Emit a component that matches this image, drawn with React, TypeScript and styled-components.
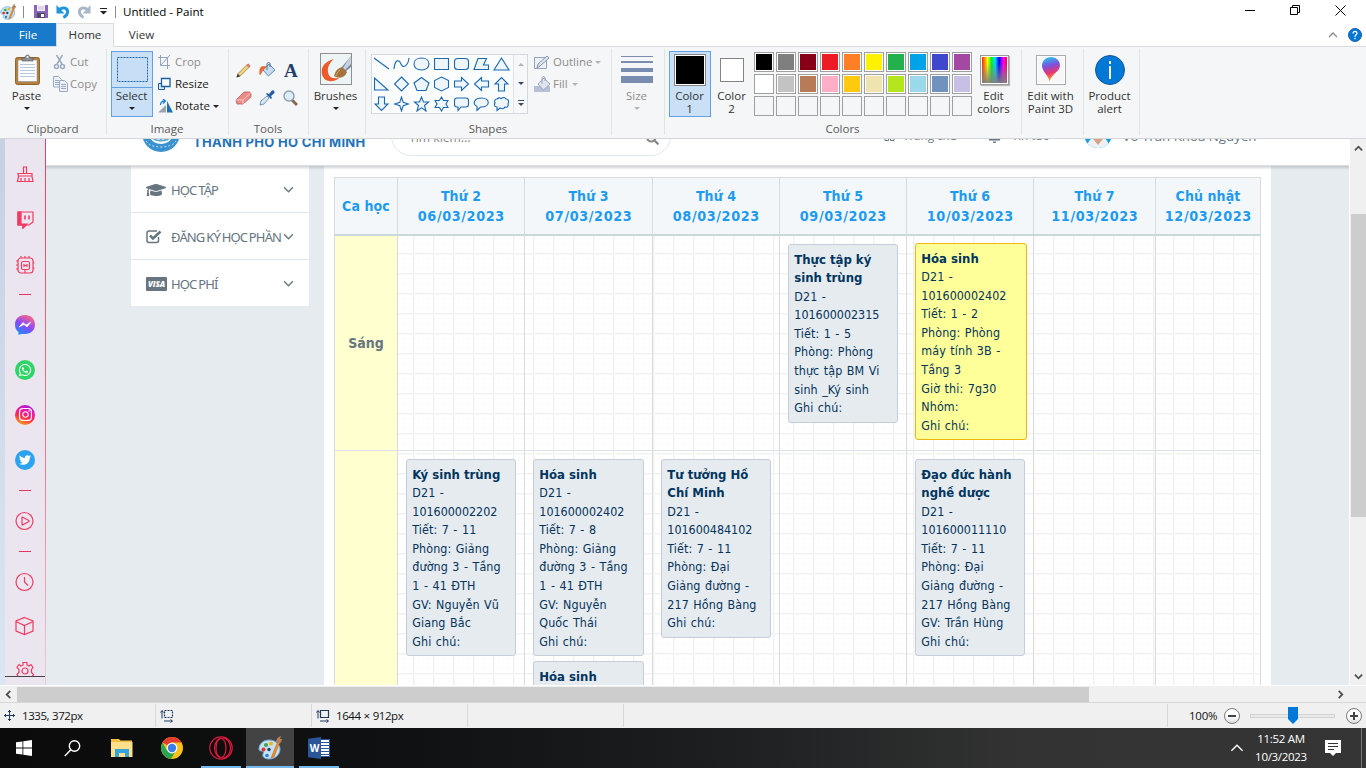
import React from 'react';
import styled, { createGlobalStyle } from 'styled-components';
import { FaGraduationCap, FaWhatsapp, FaInstagram, FaTwitter, FaSearch, FaBell } from 'react-icons/fa';

const ui = "'Open Sans', 'Noto Sans', sans-serif";
const tahoma = "'DejaVu Sans Condensed', 'DejaVu Sans', sans-serif";

const GlobalStyle = createGlobalStyle`
  * { box-sizing: border-box; }
  body { margin: 0; background: #fff; overflow: hidden; }
  svg { display: block; flex: none; }
`;

const Window = styled.div`
  width: 1366px; height: 768px; display: flex; flex-direction: column;
  font: 11.5px/16px ${ui}; color: #222; background: #fff; overflow: hidden; white-space: nowrap;
`;

/* ---------- title bar and tabs ---------- */
const TitleBar = styled.header`height: 23px; display: flex; align-items: center; flex: none;`;
const QuickAccess = styled.div`display: flex; align-items: center; width: 123px; height: 23px;`;
const Tick = styled.i<{ $l: number; $r: number }>`
  width: 1px; height: 12px; background: #8a8a8a; margin: 0 ${p => p.$r}px 0 ${p => p.$l}px;
`;
const Gap = styled.span<{ $w: number }>`width: ${p => p.$w}px;`;
const WindowTitle = styled.div`flex: 1; color: #000; font-size: 11.6px;`;
const WindowButtons = styled.div`display: flex; align-items: center; gap: 35px; padding-right: 20px; margin-top: -3px;`;
const Tabs = styled.nav`height: 23px; display: flex; flex: none; align-items: stretch;`;
const Tab = styled.div<{ $w: number; $kind?: 'file' | 'active' }>`
  width: ${p => p.$w}px; display: flex; align-items: center; justify-content: center; font-size: 11.6px; padding-top: 1px;
  color: ${p => (p.$kind === 'file' ? '#fff' : '#333')};
  background: ${p => (p.$kind === 'file' ? '#1979ca' : p.$kind === 'active' ? '#f5f6f7' : 'transparent')};
  ${p => p.$kind === 'active' && 'border: 1px solid #dadbdc; border-bottom: 0; margin-bottom: -1px; padding: 0 0 2px; position: relative; z-index: 1;'}
`;
const TabTools = styled.div`margin-left: auto; display: flex; align-items: center; gap: 10px; padding-right: 4px;`;

/* ---------- ribbon ---------- */
const Ribbon = styled.section`
  height: 93px; flex: none; display: flex; padding-top: 2px; background: #f5f6f7;
  border-top: 1px solid #dadbdc; border-bottom: 1px solid #d5d6d8;
`;
const Group = styled.div<{ $w: number; $pad?: number }>`
  width: ${p => p.$w}px; height: 86px; flex: none; display: flex; flex-direction: column;
  border-right: 1px solid #e2e3e4;
  & > div:first-child { padding-left: ${p => p.$pad ?? 0}px; }
`;
const GroupBody = styled.div`height: 70px; display: flex; padding-top: 2px;`;
const GroupLabel = styled.div`height: 16px; text-align: center; color: #5a5a5a; line-height: 18px; padding-top: 1px; padding-right: 1px;`;
const BigButton = styled.div<{ $w?: number; $on?: boolean; $off?: boolean }>`
  width: ${p => p.$w ?? 42}px; height: 66px; flex: none; display: flex; flex-direction: column; align-items: center;
  border: 1px solid ${p => (p.$on ? '#62a2e4' : 'transparent')};
  background: ${p => (p.$on ? '#c9e0f7' : 'transparent')};
  color: ${p => (p.$off ? '#8d8d8d' : '#333')};
`;
const IconBox = styled.div<{ $line?: boolean }>`
  height: 36px; width: 100%; display: flex; justify-content: center; align-items: center;
  border-bottom: 1px solid ${p => (p.$line ? '#62a2e4' : 'transparent')};
`;
const BigLabel = styled.div`line-height: 13px; text-align: center; white-space: pre; padding: 1px 1px 1px 0; `;
const Arrow = styled.i<{ $c?: string; $m?: string }>`
  width: 0; height: 0; border: 3px solid transparent; border-top-color: ${p => p.$c ?? '#222'}; border-bottom: 0; margin: ${p => p.$m ?? '0'};
`;
const Commands = styled.div<{ $gap: number }>`display: flex; flex-direction: column; padding-left: ${p => p.$gap}px;`;
const Command = styled.div<{ $off?: boolean; $icon?: number }>`
  height: 22px; display: flex; align-items: center; color: ${p => (p.$off ? '#8d8d8d' : '#222')};
  & > svg { margin-right: ${p => p.$icon ?? 2}px; }
`;
const ToolGrid = styled.div`display: grid; grid-template-columns: repeat(3, 23.5px); grid-auto-rows: 28px; padding-top: 5px; place-items: center;`;
const ShapeBox = styled.div`
  width: 157px; height: 60px; margin-top: 3px; display: flex; background: #fbfcfe; border: 1px solid #d5d8dc;
`;
const ShapeGrid = styled.div`display: grid; grid-template-columns: repeat(7, 20px); grid-auto-rows: 20px; width: 141px; place-items: center; margin-top: -1px; margin-left: -1px; margin-right: 1px;`;
const ShapeScroll = styled.div`
  width: 14px; display: flex; flex-direction: column; border-left: 1px solid #e0e2e5; background: #f7f8fa;
  & > div { flex: 1; display: flex; flex-direction: column; gap: 2px; align-items: center; justify-content: center; }
`;
const SizeBars = styled.div`
  width: 32px; height: 28px; display: flex; flex-direction: column; justify-content: space-between;
`;
const Bar = styled.i<{ $h: number }>`height: ${p => p.$h}px; background: #7a8db0;`;
const ColorWell = styled.div<{ $s: number; $c: string }>`
  width: ${p => p.$s}px; height: ${p => p.$s}px; border: 1px solid #848484; padding: 1px; background: ${p => p.$c}; background-clip: content-box; box-shadow: inset 0 0 0 1px #fff;
`;
const Palette = styled.div`display: grid; grid-template-columns: repeat(10, 20px); grid-auto-rows: 20px; gap: 2px; padding-top: 1px; margin: 0 1px; width: 218px;`;
const Swatch = styled.i<{ $c?: string }>`
  border: 1px solid #a0a0a0; padding: 1px; background-clip: content-box; background-color: ${p => p.$c ?? 'transparent'};
  box-shadow: ${p => (p.$c ? 'inset 0 0 0 1px #fff' : 'none')};
`;
const Spectrum = styled.div`
  width: 29px; height: 30px; border: 1px solid #9a9a9a; padding: 1px; background: #fff; box-shadow: 1px 1px 1px #bbb;
  & > i { display: block; height: 100%; background:
    linear-gradient(to bottom, rgba(128,128,128,0) 20%, rgba(128,128,128,.95)),
    linear-gradient(to right, #f20 0, #ff0 22%, #0e2 38%, #0df 53%, #00f 68%, #f0e 85%, #f04); }
`;
const PictureFrame = styled.div`width: 30px; height: 30px; border: 1px solid #aaa; background: #f7f7f8; display: flex; align-items: center; justify-content: center; box-shadow: inset 0 0 0 1px #fff;`;
const InfoDot = styled.div`
  width: 30px; height: 30px; border-radius: 50%; background: #0078d7; border: 1px solid #17599b; display: flex; align-items: center; justify-content: center;
`;

/* ---------- canvas ---------- */
const Work = styled.main`height: 546px; flex: none; display: flex; overflow: hidden;`;
const Wallpaper = styled.div`width: 5px; background: linear-gradient(#c7d0e3, #d3ddec 60%, #dae6f3);`;
const OperaBar = styled.aside`
  width: 41px; height: 546px; display: flex; flex-direction: column; align-items: center; padding-right: 1px;
  background: linear-gradient(#f23b62, #f3788f 60%, #eacdd9) right / 1px 100% no-repeat, #eae5ef;
`;
const OperaSlot = styled.div<{ $h: number; $cut?: boolean }>`
  width: 40px; height: ${p => p.$h}px; flex: none; display: flex; justify-content: center; align-items: ${p => (p.$cut ? 'flex-start' : 'center')};
  ${p => p.$cut && 'overflow: hidden; border-bottom: 1px solid #4a4148; padding-top: 4px;'}
`;
const Dash = styled.i<{ $up?: number }>`width: 12px; height: 1px; background: #e8355f; margin-top: -${p => p.$up ?? 0}px;`;
const Badge = styled.div<{ $bg: string }>`
  width: 20px; height: 20px; border-radius: 50%; background: ${p => p.$bg}; color: #fff; display: flex; align-items: center; justify-content: center;
`;
const Page = styled.div`width: 1304px; flex: none; display: flex; flex-direction: column; background: #e6ebef; border-right: 1px solid #fff; overflow: hidden;`;
const SiteHeader = styled.div`height: 27px; flex: none; overflow: hidden; background: #fff; border-bottom: 1px solid #dcdfe1;`;
const SiteHeaderRow = styled.div`height: 60px; margin-top: -33px; display: flex; align-items: center; font: 11.6px/18px 'Open Sans', sans-serif; color: #66757f;`;
const Brand = styled.div`
  font: 700 13px/18px Inter, sans-serif; color: #1f72ba; width: 198px; padding: 12px 0 0 12px; letter-spacing: .3px;
`;
const Logo = styled.svg`margin: -6px 0 0 95px;`;
const SearchPill = styled.div`
  width: 280px; height: 40px; border: 1px solid #e3e8ec; border-radius: 20px; display: flex; align-items: center; justify-content: space-between;
  padding: 4px 11px 0 17px; margin-left: 12px; color: #858585; font-size: 12.2px;
`;
const HeaderItem = styled.div<{ $l: number; $gap: number; $size?: number }>`display: flex; align-items: center; gap: ${p => p.$gap}px; margin-left: ${p => p.$l}px; font-size: ${p => p.$size ?? 11.6}px;`;
const Avatar = styled.svg`margin-top: -4px;`;
const HeaderShade = styled.div`height: 4px; margin-bottom: -4px; flex: none; background: linear-gradient(rgba(90,100,110,.28), rgba(90,100,110,0)); position: relative;`;
const Columns = styled.div`flex: 1; display: flex; padding-left: 85px; gap: 15px; min-height: 0;`;
const Menu = styled.div`width: 178px; height: 140px; background: #fff; display: flex; flex-direction: column; flex: none;`;
const MenuItem = styled.div`
  flex: 1; display: flex; align-items: center; padding: 1px 15px 0 15px; border-bottom: 1px solid #e3e8ec; color: #66757f;
  font: 13px/18px 'Noto Sans', sans-serif; letter-spacing: -.85px; word-spacing: -.8px;
  &:last-child { border-bottom: 0; }
  & > span { flex: 1; min-width: 0; }
`;
const MenuIcon = styled.div`width: 25px; flex: none; display: flex; align-items: center;`;
const Visa = styled.b`
  width: 21px; height: 14px; background: #66757f; color: #fff; border-radius: 1px; text-align: center; font: italic 800 8px/14px 'Open Sans', sans-serif; letter-spacing: -.1px;
`;
const Board = styled.div`width: 947px; background: #fff; padding: 11px 0 0 10px; overflow: hidden; flex: none;`;
const cols = '64px 127px 128px 127px 127px 127px 122px 105px';
const Days = styled.div`
  display: grid; grid-template-columns: ${cols}; width: 927px; height: 59px; background: #f3f7fa; border-top: 1px solid #d9dcde; border-bottom: 2px solid #c9d8d8;
`;
const Day = styled.div`
  border-right: 1px solid #d9dcde; display: flex; flex-direction: column; align-items: center; justify-content: center;
  font: bold 14px/20px ${tahoma}; color: #1e9bf0; letter-spacing: .1px;
  &:first-child { border-left: 1px solid #d9dcde; }
  & > time { font-size: 14.3px; letter-spacing: .6px; margin-right: -.6px; }
`;
const Weeks = styled.div`
  width: 927px; background-color: #fff;
  background-image:
    linear-gradient(to right, #f1f1f1 1px, #f9f9f9 1px, #f9f9f9 2px, transparent 2px),
    linear-gradient(to bottom, #f1f1f1 1px, #f9f9f9 1px, #f9f9f9 2px, transparent 2px),
    linear-gradient(to right, #fdfdfd 1px, transparent 1px),
    linear-gradient(to bottom, #fdfdfd 1px, transparent 1px);
  background-size: 20px 20px, 20px 20px, 5px 5px, 5px 5px;
  background-position: 19px 17px, 19px 17px, 19px 17px, 19px 17px;
`;
const Session = styled.div<{ $h: number }>`
  display: grid; grid-template-columns: ${cols}; height: ${p => p.$h}px; border-bottom: 1px solid #dcdfec;
`;
const SessionName = styled.div`
  background: #ffffcf; border: 0 solid #d9dcde; border-width: 0 1px; display: flex; align-items: center; justify-content: center;
  font: bold 14px/20px ${tahoma}; color: #66757f;
`;
const Cell = styled.div`border-right: 1px solid #d9dcde; padding: 8px; display: flex; flex-direction: column; gap: 4.5px;`;
const Card = styled.div<{ $exam?: boolean }>`
  border: 1px solid ${p => (p.$exam ? '#edb50e' : '#c5cddb')}; background: ${p => (p.$exam ? '#ffff99' : '#e6ebef')}; border-radius: 3px;
  padding: 5.6px 0 4.2px 5.3px; color: #04335c; font: 12.4px/18.57px ${tahoma}; ${p => p.$exam && 'margin: -1px -2px 0 0;'}
  & > b { display: block; color: #003560; font-size: 13px; }
`;
const Line = styled.div<{ $digits: boolean }>`
  height: 18.57px; letter-spacing: ${p => (p.$digits ? 0 : 0.1)}px; word-spacing: .8px;
`;
const VScroll = styled.div`
  width: 16px; background: #f0f0f0; display: flex; flex-direction: column; align-items: center; padding: 5px 0 4px;
  & > i { width: 15px; height: 303px; background: #cdcdcd; margin: 61px 0 auto; }
`;
const HScroll = styled.div`
  height: 17px; flex: none; display: flex; align-items: center; background: #f0f0f0; border-top: 1px solid #fff; padding: 0 21px 0 4px;
  & > i { width: 1072px; height: 15px; background: #cdcdcd; margin: 0 auto 0 4px; }
`;

/* ---------- status bar ---------- */
const Status = styled.footer`
  height: 26px; flex: none; display: flex; align-items: center; background: #f0f0f0; border-top: 1px solid #d7d7d7; color: #111; font-size: 11.5px; letter-spacing: -.45px; word-spacing: .5px;
`;
const StatusPart = styled.div<{ $w: number }>`
  width: ${p => p.$w}px; height: 23px; display: flex; align-items: center; gap: 7px; padding-left: 4px; border-right: 1px solid #d7d7d7;
  & > svg + span { margin-left: -1px; }
`;
const Zoom = styled.div`display: flex; align-items: center; padding-left: 21px;`;
const ZoomValue = styled.span`width: 35px; letter-spacing: -.25px;`;
const Round = styled.div`
  width: 16px; height: 16px; border: 1px solid #7b7b7b; border-radius: 50%; background: linear-gradient(#fff 50%, #ddd); display: flex; align-items: center; justify-content: center;
`;
const Track = styled.div`width: 85px; height: 4px; border: 1px solid #d3d3d3; background: #e9e9e9; margin: 0 11px 0 10px; display: flex; align-items: center; justify-content: center;`;

/* ---------- taskbar ---------- */
const Taskbar = styled.footer`
  height: 40px; flex: none; display: flex; color: #fff;
  background: linear-gradient(to right, #0b0b0b, #101112 30%, #1c1e1f 52%, #333 75%, #353535);
`;
const Task = styled.div<{ $bar?: boolean; $on?: boolean; $r?: number }>`
  width: 48px; margin-right: ${p => p.$r ?? 1}px; display: flex; align-items: center; justify-content: center; background: ${p => (p.$on ? '#434343' : 'transparent')};
  box-shadow: ${p => (p.$on ? 'inset 0 -2px #76b9ed' : 'none')};
  ${p => p.$bar && 'background: linear-gradient(#76b9ed, #76b9ed) 50% 100% / 40px 2px no-repeat;'}
`;
const Tray = styled.div`margin-left: auto; display: flex; align-items: center; padding-right: 4px;`;
const Clock = styled.div`font-size: 11.5px; line-height: 18px; text-align: center; width: 60px; margin: 0 14px 0 7px; letter-spacing: -.3px;`;
const ShowDesktop = styled.i`width: 1px; height: 40px; background: #777; margin-left: 20px;`;

/* ---------- drawings ---------- */
const PaintIcon = ({ s = 24 }: { s?: number }) => (
  <svg width={s} height={s} viewBox="0 0 24 24">
    <path d="M11 4C5 4 1 8 1 13c0 2 1.500 2 3 2s2 1 1 3 1 5 6 5c7 0 11-5 11-10S17 4 11 4z" fill="#c5e2f5" stroke="#6aa9d6" />
    <circle cx="5.500" cy="13.500" r="2" fill="#e0342c" /><circle cx="8" cy="9" r="2" fill="#3aa845" />
    <circle cx="13" cy="7.500" r="2" fill="#f1b51c" /><circle cx="11" cy="13.500" r="1.700" fill="#1d3f5c" /><circle cx="9" cy="19.500" r="1.800" fill="#2f7dd1" />
    <path d="M19.500 6 13 22l3-1 5.500-14z" fill="#f08a24" stroke="#b7621a" strokeWidth=".5" />
    <path d="M18 6c0-3 2-5 5-6l-1 3 2 0c0 2-1.500 4-3 5z" fill="#b98057" />
  </svg>
);
const SaveIcon = () => (
  <svg width="14" height="15" viewBox="0 0 14 15"><path d="M0 1h14v13H0z" fill="#8a64b8" /><path d="M3 1h8v6H3z" fill="#f4f1fa" /><path d="M3 9h8v5H3z" fill="#4c4a66" /><path d="M7 10h3v3H7z" fill="#fff" /><path d="M4 3h6M4 5h6" stroke="#c8bddc" /></svg>
);
const UndoIcon = ({ flip }: { flip?: boolean }) => (
  <svg width="14" height="15" viewBox="0 0 14 15"><g transform={flip ? 'translate(14 0) scale(-1 1)' : undefined}>
    <path d="M3.500 5.500C7 2.500 12 4 11.600 8.200c-.2 2.600-2 4.300-4.200 5.300" fill="none" stroke={flip ? '#a9b7c9' : '#1f95dc'} strokeWidth="3" />
    <path d="M.500 1v8.500h8z" fill={flip ? '#a9b7c9' : '#1f95dc'} />
  </g></svg>
);
const PasteIcon = () => (
  <svg width="25" height="31" viewBox="0 0 25 31"><rect x=".500" y="3.500" width="24" height="27" rx="2" fill="#b5803c" stroke="#93642b" /><path d="M3 6h19v21.500H3z" fill="#fbfcfe" stroke="#8b94a3" strokeWidth=".6" />
    <path d="M5 10.500h15M5 13.500h15M5 16.500h15M5 19.500h15M5 22.500h15" stroke="#b9c9dd" /><path d="M7 7V4h3c0-4 5-4 5 0h3v3z" fill="#8c8f93" stroke="#55585c" strokeWidth=".6" /><circle cx="12.500" cy="3" r="1" fill="#fff" /></svg>
);
const CutIcon = () => (
  <svg width="15" height="16" viewBox="0 0 15 16" fill="none" stroke="#9aaac3" strokeWidth="1.500"><path d="M3.500 1 9 10M9.500 1 4 10" /><circle cx="3.500" cy="12.500" r="2" /><circle cx="9.500" cy="12.500" r="2" /></svg>
);
const CopyIcon = () => (
  <svg width="16" height="16" viewBox="0 0 16 16" fill="#eef2f8" stroke="#9aaac3"><path d="M.500.500h5l3 3V11h-8z" /><path d="M2 4.500h4M2 6.500h4M2 8.500h4" /><path d="M6.500 4.500h5l3 3V15.500h-8z" /><path d="M8 8.500h5M8 10.500h5M8 12.500h5" /></svg>
);
const SelectIcon = () => <svg width="31" height="26" viewBox="0 0 31 26"><rect x=".500" y=".500" width="30" height="24" fill="#c6dff7" stroke="#1c66a5" strokeDasharray="2 1" /></svg>;
const CropIcon = () => (
  <svg width="15" height="14" viewBox="0 0 15 14" fill="none" stroke="#95a5bf"><path d="M2.500 0v10.500H12M0 2.500h9.500V14" /><path d="M3 10 12 0" /></svg>
);
const ResizeIcon = () => <svg width="15" height="14" viewBox="0 0 15 14" fill="#fff" stroke="#155f9e"><path d="M.500 6.500h6v6h-6z" fill="#d9e9f7" /><path d="M3.500 1.500h8.500v8H3.500z" strokeWidth="1.300" /></svg>;
const RotateIcon = () => <svg width="17" height="15" viewBox="0 0 17 15"><path d="M0 13.500 8 6v7.500z" fill="#9aa3ae" /><path d="M9 2v11.500h6z" fill="#1d71b4" /><path d="M2.500 6c0-3 1.500-4 4-4M5 0l2.500 2L5 4.500" fill="none" stroke="#1f84d6" strokeWidth="1.300" /></svg>;
const PencilIcon = () => <svg width="15" height="15" viewBox="0 0 16 16"><path d="m1 15 1.500-4L12 1.500l2.500 2.500-9.500 9.500z" fill="#f0d27a" stroke="#8e6d36" strokeWidth=".7" /><path d="m11 2.500 2.600 2.600L15.500 3 13 .500z" fill="#d97b72" /><path d="m.500 15.500 1.300-4 2.600 2.600z" fill="#333" /></svg>;
const FillIcon = ({ gray }: { gray?: boolean }) => (
  <svg width="17" height="16" viewBox="0 0 17 16">{gray && <path d="M0 10h16v6H0z" fill="#b6c1d6" />}<path d="m4 8 6-6 6 6-6.500 6z" fill={gray ? '#dfe5ee' : '#c7dcf0'} stroke={gray ? '#95a5bf' : '#5e8cb8'} /><path d="M8 8V2c0-2 3-2 3 0v3" fill="none" stroke={gray ? '#95a5bf' : '#4c6f92'} />
    {!gray && <path d="M5 4C1 4 0 7 .500 13c2 0 2-3 4-5l3-3.500z" fill="#ee6a34" />}</svg>
);
const LetterA = styled.b`font: bold 19px/18px 'Liberation Serif', serif; color: #1f3e6b; height: 16px;`;
const EraserIcon = () => <svg width="17" height="14" viewBox="0 0 17 14"><path d="m1 9 8-8h6l1 2v3l-8 7H2z" fill="#e98b87" stroke="#c05c5c" strokeWidth=".8" /><path d="m1 9 7 0 8-7.500M8 9v4" fill="none" stroke="#f7c8c2" /></svg>;
const PickerIcon = () => <svg width="16" height="16" viewBox="0 0 16 16"><path d="m1 15 1-4 6-5 2 2-5 6z" fill="#d7e8f6" stroke="#5b7f9f" strokeWidth=".8" /><path d="m7 4 1-1 2 1 2.500-3c2-2 4 1 2.500 2.500L12 6l1 2-1 1z" fill="#2a5fa6" /></svg>;
const LensIcon = () => <svg width="15" height="17" viewBox="0 0 15 17"><path d="m9 10 5 5" stroke="#8a674e" strokeWidth="3" /><circle cx="6" cy="6" r="5" fill="#dcedfa" stroke="#8f9eae" strokeWidth="1.400" /></svg>;
const BrushIcon = () => (
  <svg width="32" height="33" viewBox="0 0 32 33"><rect x=".500" y=".500" width="31" height="31" fill="#edf4f6" stroke="#909090" />
    <path d="M14 6C3 9 0 16 2.500 23c2.500 6 10 7 17 2-6 1-10 0-11-4C6.500 16 9 10 14 6z" fill="#ee5a28" /><path d="m31 3-10 12 4 4 6-5z" fill="#7b8aa3" /><path d="m31 2-8 13 2 2 6-6z" fill="#c5d0de" /><path d="M22 14c-7 2-7 7-8 9 5 3 11 2 13-4z" fill="#a5713d" /><path d="M20 17c-3 2-3 4-4 6" stroke="#d8a462" fill="none" /></svg>
);
const OutlineIcon = () => <svg width="17" height="15" viewBox="0 0 17 15"><path d="M.500 2.500h12v11H.500z" fill="#eef2f8" stroke="#95a5bf" /><path d="m3 13 1-4 9-8 2 2-9 8z" fill="#dfe5ee" stroke="#8495b0" /></svg>;
const shapes = [
  'M1 2 16 13', 'M1 13C2 3 6 3 8 8s7 2 8-6', 'M8.500 2c4.500 0 7.500 2.500 7.500 6s-3 6-7.500 6S1 11.500 1 8s3-6 7.500-6z', 'M1.500 2.500h14v11h-14z', 'M4.500 2.500h8q3 0 3 3v5q0 3-3 3h-8q-3 0-3-3v-5q0-3 3-3z',
  'M1 13.500 5 2.500h8.500L10.500 9h5v4.500z', 'M8.500 2 16 14H1z', 'M1.500 2v12H15z', 'm8.500 1 7 7-7 7-7-7z', 'm8.500 1.500 7.500 5.500-3 7.500H4L1 7z', 'm8.500 1 7 3.500v7l-7 3.500-7-3.500v-7z',
  'M1.500 5h7V1.500L15.500 8l-7 6.500V11h-7z', 'M15.500 5h-7V1.500L1.500 8l7 6.500V11h7z', 'M5.500 15V8H2l6.500-6.500L15 8h-3.500v7z', 'M5.500 1v7H2l6.500 6.500L15 8h-3.500V1z',
  'm8.500 1 1.700 5.300L15.500 8l-5.300 1.700L8.500 15 6.800 9.700 1.500 8l5.300-1.700z', 'm8.500 1 2 5h5l-4 3.500 1.500 5.500-4.500-3.200L4 15l1.500-5.500L1.500 6h5z', 'm8.500 1 2 3.500h4.500L13 8l2 3.500h-4.500l-2 3.500-2-3.500H2L4 8 2 4.500h4.500z',
  'M4 2h9q2.500 0 2.500 2.500v4Q15.500 11 13 11H8l-3 3.500V11H4q-2.500 0-2.500-2.500v-4Q1.500 2 4 2z', 'M8.500 2c9 0 9 9 0 9h-1L4 14.500v-4C-1 8 1 2 8.500 2z', 'M4 3c2-2 3-1 4.500-.5C10 1 12 1 13 3c3 0 3 3 2 5 1 2-1 4-3 3-1 2-3 2-5 1L4 14.500V11C1 11 1 8 2 7 1 5 2 3 4 3z',
];
const Chevron = ({ d, c = '#505050', w = 10, sw = 2 }: { d: 'u' | 'd' | 'l' | 'r'; c?: string; w?: number; sw?: number }) => (
  <svg width={w} height={w} viewBox="0 0 10 10" fill="none" stroke={c} strokeWidth={sw}>
    <path d={{ u: 'm1 7 4-4 4 4', d: 'm1 3 4 4 4-4', l: 'M7 1 3 5l4 4', r: 'm3 1 4 4-4 4' }[d]} />
  </svg>
);
const Pink = ({ children, s = 20 }: { children: React.ReactNode; s?: number }) => <svg width={s} height={s} viewBox="0 0 20 20" fill="none" stroke="#f23a62" strokeWidth="1.200">{children}</svg>;
const SizeIcon = ({ dashed }: { dashed?: boolean }) => (
  <svg width="14" height="14" viewBox="0 0 14 14" fill="none" stroke="#1e3a5f"><path d="M2 9.500V2M.500 3.500 2 1.500l1.500 2M4 12h8M10.500 10.500l2 1.500-2 1.500" /><path d="M4.500 1.500h8v7h-8z" strokeDasharray={dashed ? '2 1' : undefined} strokeWidth="1.200" /></svg>
);

const palette = ['#000', '#7f7f7f', '#880015', '#ed1c24', '#ff7f27', '#fff200', '#22b14c', '#00a2e8', '#3f48cc', '#a349a4', '#fff', '#c3c3c3', '#b97a57', '#ffaec9', '#ffc90e', '#efe4b0', '#b5e61d', '#99d9ea', '#7092be', '#c8bfe7'];
const days = [['Ca học', ''], ['Thứ 2', '06/03/2023'], ['Thứ 3', '07/03/2023'], ['Thứ 4', '08/03/2023'], ['Thứ 5', '09/03/2023'], ['Thứ 6', '10/03/2023'], ['Thứ 7', '11/03/2023'], ['Chủ nhật', '12/03/2023']];
type Lesson = { title: string[]; lines: string[]; exam?: boolean };
const morning: Lesson[][] = [[], [], [],
  [{ title: ['Thực tập ký', 'sinh trùng'], lines: ['D21 -', '101600002315', 'Tiết: 1 - 5', 'Phòng: Phòng', 'thực tập BM Vi', 'sinh _Ký sinh', 'Ghi chú:'] }],
  [{ exam: true, title: ['Hóa sinh'], lines: ['D21 -', '101600002402', 'Tiết: 1 - 2', 'Phòng: Phòng', 'máy tính 3B -', 'Tầng 3', 'Giờ thi: 7g30', 'Nhóm:', 'Ghi chú:'] }], [], []];
const afternoon: Lesson[][] = [
  [{ title: ['Ký sinh trùng'], lines: ['D21 -', '101600002202', 'Tiết: 7 - 11', 'Phòng: Giảng', 'đường 3 - Tầng', '1 - 41 ĐTH', 'GV: Nguyễn Vũ', 'Giang Bắc', 'Ghi chú:'] }],
  [{ title: ['Hóa sinh'], lines: ['D21 -', '101600002402', 'Tiết: 7 - 8', 'Phòng: Giảng', 'đường 3 - Tầng', '1 - 41 ĐTH', 'GV: Nguyễn', 'Quốc Thái', 'Ghi chú:'] }, { title: ['Hóa sinh'], lines: [] }],
  [{ title: ['Tư tưởng Hồ', 'Chí Minh'], lines: ['D21 -', '101600484102', 'Tiết: 7 - 11', 'Phòng: Đại', 'Giảng đường -', '217 Hồng Bàng', 'Ghi chú:'] }], [],
  [{ title: ['Đạo đức hành', 'nghề dược'], lines: ['D21 -', '101600011110', 'Tiết: 7 - 11', 'Phòng: Đại', 'Giảng đường -', '217 Hồng Bàng', 'GV: Trần Hùng', 'Ghi chú:'] }], [], []];

const Lessons = ({ row }: { row: Lesson[][] }) => (
  <>
    {row.map((cell, i) => (
      <Cell key={i}>
        {cell.map((l, j) => (
          <Card key={j} $exam={l.exam}>
            {l.title.map(t => <b key={t}>{t}</b>)}
            {l.lines.map((t, k) => <Line key={k} $digits={/^\d{6,}$/.test(t)}>{t}</Line>)}
          </Card>
        ))}
      </Cell>
    ))}
  </>
);

const RibbonView = () => (
  <Ribbon>
    <Group $w={107} $pad={6}>
      <GroupBody>
        <BigButton><IconBox><PasteIcon /></IconBox><BigLabel>Paste</BigLabel><Arrow $m="4px 1px 0 0" /></BigButton>
        <Commands $gap={5}>
          <Command $off><CutIcon />Cut</Command>
          <Command $off $icon={1}><CopyIcon />Copy</Command>
        </Commands>
      </GroupBody>
      <GroupLabel>Clipboard</GroupLabel>
    </Group>
    <Group $w={122} $pad={4}>
      <GroupBody>
        <BigButton $on><IconBox $line><SelectIcon /></IconBox><BigLabel>Select</BigLabel><Arrow $m="4px 1px 0 0" /></BigButton>
        <Commands $gap={5}>
          <Command $off><CropIcon />Crop</Command>
          <Command><ResizeIcon />Resize</Command>
          <Command $icon={0}><RotateIcon />Rotate<Arrow $m="0 0 0 3px" /></Command>
        </Commands>
      </GroupBody>
      <GroupLabel>Image</GroupLabel>
    </Group>
    <Group $w={80} $pad={3}>
      <GroupBody><ToolGrid><PencilIcon /><FillIcon /><LetterA>A</LetterA><EraserIcon /><PickerIcon /><LensIcon /></ToolGrid></GroupBody>
      <GroupLabel>Tools</GroupLabel>
    </Group>
    <Group $w={57} $pad={3}>
      <GroupBody><BigButton $w={48}><IconBox><BrushIcon /></IconBox><BigLabel>Brushes</BigLabel><Arrow $m="4px 1px 0 0" /></BigButton></GroupBody>
    </Group>
    <Group $w={246} $pad={5}>
      <GroupBody>
        <ShapeBox>
          <ShapeGrid>{shapes.map((d, i) => <svg key={i} width="17" height="16" viewBox="0 0 17 16" fill={i < 2 ? 'none' : '#eef6fb'} stroke="#1b69ad" strokeWidth="1.100"><path d={d} /></svg>)}</ShapeGrid>
          <ShapeScroll>
            <div><svg width="6" height="3"><path d="M0 3 3 0l3 3z" fill="#b0b4ba" /></svg></div>
            <div><Arrow $c="#3a4a63" /></div>
            <div><svg width="6" height="1"><path d="M0 0h6v1H0z" fill="#3a4a63" /></svg><Arrow $c="#3a4a63" /></div>
          </ShapeScroll>
        </ShapeBox>
        <Commands $gap={6}>
          <Command $off><OutlineIcon />Outline<Arrow $c="#b5b5b5" $m="0 0 0 3px" /></Command>
          <Command $off><FillIcon gray />Fill<Arrow $c="#b5b5b5" $m="0 0 0 4px" /></Command>
        </Commands>
      </GroupBody>
      <GroupLabel>Shapes</GroupLabel>
    </Group>
    <Group $w={53} $pad={4}>
      <GroupBody>
        <BigButton $off>
          <IconBox><SizeBars><Bar $h={1} /><Bar $h={2} /><Bar $h={4} /><Bar $h={7} /></SizeBars></IconBox>
          <BigLabel>Size</BigLabel><Arrow $c="#b5b5b5" $m="4px 0 0" />
        </BigButton>
      </GroupBody>
    </Group>
    <Group $w={357} $pad={4}>
      <GroupBody>
        <BigButton $on><IconBox><ColorWell $s={32} $c="#000" /></IconBox><BigLabel>{'Color\n1'}</BigLabel></BigButton>
        <BigButton><IconBox><ColorWell $s={24} $c="#fff" /></IconBox><BigLabel>{'Color\n2'}</BigLabel></BigButton>
        <Palette>{Array.from({ length: 30 }, (_, i) => <Swatch key={i} $c={palette[i]} />)}</Palette>
        <BigButton><IconBox><Spectrum><i /></Spectrum></IconBox><BigLabel>{'Edit\ncolors'}</BigLabel></BigButton>
      </GroupBody>
      <GroupLabel>Colors</GroupLabel>
    </Group>
    <Group $w={62} $pad={2}>
      <GroupBody>
        <BigButton $w={54}>
          <IconBox>
            <PictureFrame>
              <svg width="18" height="25" viewBox="0 0 18 25">
                <defs><linearGradient id="p3d" x1=".3" y1="0" x2=".5" y2="1"><stop offset="0" stopColor="#25c8ee" /><stop offset=".35" stopColor="#7a52e0" /><stop offset=".65" stopColor="#e63672" /><stop offset="1" stopColor="#ffb21c" /></linearGradient></defs>
                <path d="M9 0c5 0 9 4 9 8.500 0 6-8 8-10.500 16C6.500 18 0 15 0 8.500 0 4 4 0 9 0z" fill="url(#p3d)" />
              </svg>
            </PictureFrame>
          </IconBox>
          <BigLabel>{'Edit with\nPaint 3D'}</BigLabel>
        </BigButton>
      </GroupBody>
    </Group>
    <Group $w={56} $pad={1}>
      <GroupBody>
        <BigButton $w={50}>
          <IconBox><InfoDot><svg width="4" height="18"><path d="M1 0h2v3H1zM1 5h2v13H1z" fill="#fff" /></svg></InfoDot></IconBox>
          <BigLabel>{'Product\nalert'}</BigLabel>
        </BigButton>
      </GroupBody>
    </Group>
  </Ribbon>
);

const OperaView = () => (
  <OperaBar>
    <OperaSlot $h={70}><Pink><path d="M3 9.500h14v3L18 17.500H2.500l1-5zM8.500 9V3h3v6M6 17v-3M10 17v-3M14 17v-3M4 12h13" /></Pink></OperaSlot>
    <OperaSlot $h={20}><Pink><path d="M3 3h15v10l-4 3h-3l-3 3v-3H3z" /><path d="M3 3v13h5v3l3-3 1-1H6V3z" fill="#f23a62" /><path d="M10 6.500v4M14 6.500v4" strokeWidth="1.600" /></Pink></OperaSlot>
    <OperaSlot $h={71}><Pink><rect x="3" y="3" width="15" height="15" rx="3" /><rect x="6.500" y="6.500" width="8" height="8" rx="1.500" /><path d="M9 9v3M12 9v3M9 10.500h3M6 1v2M10 1v2M14 1v2M1 6h2M1 10h2M1 14h2M18 8h1.500M18 13h1.500M10 15v3" /></Pink></OperaSlot>
    <Dash $up={6} />
    <OperaSlot $h={60}>
      <svg width="20" height="20" viewBox="0 0 20 20"><defs><linearGradient id="msg" x1=".2" y1="1" x2=".7" y2="0"><stop stopColor="#1292ff" /><stop offset=".5" stopColor="#8b48fb" /><stop offset="1" stopColor="#ff6680" /></linearGradient></defs><path d="M10 0c6 0 10 4 10 9.500S16 19 10 19c-2 0-3 0-4 0l-2.500 1V17C1 15 0 13 0 9.500 0 4 4 0 10 0z" fill="url(#msg)" /><path d="m4 12 4-4.500 3 2.500 5-3-4 5-3-2.500z" fill="#fff" stroke="#fff" strokeWidth=".6" /></svg>
    </OperaSlot>
    <OperaSlot $h={29}><Badge $bg="#2fd667"><FaWhatsapp size={14} /></Badge></OperaSlot>
    <OperaSlot $h={61}><Badge $bg="linear-gradient(200deg, #8a1ff0 5%, #f314a8 35%, #ff2a4d 60%, #ffb21a 95%)"><FaInstagram size={15} /></Badge></OperaSlot>
    <OperaSlot $h={29}><Badge $bg="#2ba3f0"><FaTwitter size={12} /></Badge></OperaSlot>
    <OperaSlot $h={33}><Dash /></OperaSlot>
    <OperaSlot $h={27}><Pink><circle cx="9.500" cy="10" r="8.500" /><path d="M7 6.500v7q0 .7.700.4L14 10.500v-1L7.700 6.200Q7 6 7 6.500z" /></Pink></OperaSlot>
    <OperaSlot $h={34}><Dash /></OperaSlot>
    <OperaSlot $h={27}><Pink><circle cx="9.500" cy="10" r="8.500" /><path d="M9.500 5v5l3.500 3.500" /></Pink></OperaSlot>
    <OperaSlot $h={62}><Pink><path d="M9.500 1.500 18 5v10L9.500 18.500 1 15V5zM1 5.500l8.500 4 8.500-4M9.500 9.500v9" /></Pink></OperaSlot>
    <OperaSlot $h={20} $cut><Pink><path d="M8 4V1.500h4V4l2 1 2-1.500 2 3-1.500 2v3l2 2-2 3-2-1-2 1V19H8v-2.500l-2-1-2 1-2-3 2-2v-3l-2-2 2-3L6 5z" /><circle cx="10" cy="10" r="3" /></Pink></OperaSlot>
  </OperaBar>
);

const SiteView = () => (
  <Page>
    <SiteHeader>
      <SiteHeaderRow>
        <Logo width="40" height="40" viewBox="0 0 40 40">
          <circle cx="20" cy="20" r="19" fill="#3a92d0" /><circle cx="20" cy="18" r="13" fill="#f2f8fc" /><path d="M10 24c6 5 14 5 20 0M12 21l15 6M28 20l-10 8" stroke="#5aa6db" strokeWidth="1.500" fill="none" /><path d="M5 28c4 8 26 8 30 0" fill="none" stroke="#bfe0f4" strokeDasharray="2 2" />
        </Logo>
        <Brand>THÀNH PHỐ HỒ CHÍ MINH</Brand>
        <SearchPill><span>Tìm kiếm...</span><FaSearch size={13} /></SearchPill>
        <HeaderItem $l={213} $gap={8}><svg width="11" height="12" viewBox="0 0 11 12" fill="none" stroke="#66757f"><path d="M1 5v5.500h3.500V7h2v3.500H10V5L5.500 1z" /></svg>Trang chủ</HeaderItem>
        <HeaderItem $l={31} $gap={11}><FaBell size={13} />Tin tức</HeaderItem>
        <HeaderItem $l={35} $gap={11} $size={13.300}>
          <Avatar width="28" height="28" viewBox="0 0 28 28"><defs><clipPath id="av"><circle cx="14" cy="14" r="14" /></clipPath></defs><g clipPath="url(#av)"><path d="M0 0h28v28H0z" fill="#159ee0" /><path d="M3 28c0-6 4-10 7-11h8c4 1 7 5 7 11z" fill="#eef1f6" /><path d="M9 6h10v13l-5 6-5-6z" fill="#d9a384" /></g></Avatar>
          Võ Trần Khoa Nguyên
        </HeaderItem>
      </SiteHeaderRow>
    </SiteHeader>
    <HeaderShade />
    <Columns>
      <Menu>
        <MenuItem><MenuIcon><FaGraduationCap size={20} /></MenuIcon><span>HỌC TẬP</span><Chevron d="d" c="#66757f" w={11} sw={1.2} /></MenuItem>
        <MenuItem><MenuIcon><svg width="16" height="15" viewBox="0 0 16 15" fill="none" stroke="#66757f"><path d="M12.500 8v3.500q0 2-2 2H3q-2 0-2-2V4q0-2 2-2h8" strokeWidth="1.500" /><path d="m4 6.500 3 3 7.500-7" strokeWidth="2.500" /></svg></MenuIcon><span>ĐĂNG KÝ HỌC PHẦN</span><Chevron d="d" c="#66757f" w={11} sw={1.2} /></MenuItem>
        <MenuItem><MenuIcon><Visa>VISA</Visa></MenuIcon><span>HỌC PHÍ</span><Chevron d="d" c="#66757f" w={11} sw={1.2} /></MenuItem>
      </Menu>
      <Board>
        <Days>{days.map(([name, date]) => <Day key={name}>{name}{date && <time>{date}</time>}</Day>)}</Days>
        <Weeks>
          <Session $h={215}><SessionName>Sáng</SessionName><Lessons row={morning} /></Session>
          <Session $h={300}><SessionName /><Lessons row={afternoon} /></Session>
        </Weeks>
      </Board>
    </Columns>
  </Page>
);

const WordTile = styled.div`
  width: 22px; height: 22px; display: flex; align-items: center;
  & > b { width: 13px; height: 22px; background: #2a5699; color: #fff; font: bold 10px/22px 'Open Sans', sans-serif; text-align: center; clip-path: polygon(0 8%, 100% 0, 100% 100%, 0 92%); }
  & > i { width: 9px; height: 18px; border: 1px solid #2a5699; border-left: 0; background: repeating-linear-gradient(#fff 0 2px, #2a5699 2px 3px); }
`;

export default function App() {
  return (
    <Window>
      <GlobalStyle />
      <TitleBar>
        <QuickAccess>
          <PaintIcon s={16} /><Tick $l={7} $r={10} /><SaveIcon />
          <Gap $w={8} /><UndoIcon />
          <Gap $w={7} /><UndoIcon flip />
          <Gap $w={9} /><svg width="7" height="7" viewBox="0 0 7 7"><path d="M0 0h7v1H0zM0 3h7L3.500 6.500z" fill="#222" /></svg>
          <Tick $l={8} $r={0} />
        </QuickAccess>
        <WindowTitle>Untitled - Paint</WindowTitle>
        <WindowButtons>
          <svg width="10" height="10"><path d="M0 5.500h10" stroke="#000" /></svg>
          <svg width="10" height="10" fill="none" stroke="#000"><path d="M.500 2.500h7v7h-7zM2.500 2.500v-2h7v7h-2" /></svg>
          <svg width="11" height="11" stroke="#000"><path d="m.500.500 10 10M10.500.500l-10 10" /></svg>
        </WindowButtons>
      </TitleBar>
      <Tabs>
        <Tab $w={56} $kind="file">File</Tab><Tab $w={58} $kind="active">Home</Tab><Tab $w={55}>View</Tab>
        <TabTools>
          <Chevron d="u" c="#8b8b8b" sw={1.3} />
          <svg width="14" height="14" viewBox="0 0 14 14"><circle cx="7" cy="7" r="6.500" fill="#0078d7" stroke="#1b5fa6" /><path d="M5 5.500c0-3 4.300-2.500 4 0C8.800 6.800 7 6.800 7 8.700M7 9.800v1.400" fill="none" stroke="#fff" strokeWidth="1.300" /></svg>
        </TabTools>
      </Tabs>
      <RibbonView />
      <Work>
        <Wallpaper /><OperaView /><SiteView />
        <VScroll><Chevron d="u" w={9} /><i /><Chevron d="d" w={9} /></VScroll>
      </Work>
      <HScroll><Chevron d="l" w={9} /><i /><Chevron d="r" w={9} /></HScroll>
      <Status>
        <StatusPart $w={156}><svg width="11" height="11" viewBox="0 0 11 11" fill="none" stroke="#1e3a5f"><path d="M5.500 0v11M0 5.500h11M4 2l1.500-1.500L7 2M4 9l1.500 1.500L7 9M2 4 .500 5.500 2 7M9 4l1.500 1.500L9 7" /></svg>1335, 372px</StatusPart>
        <StatusPart $w={156}><SizeIcon dashed /></StatusPart>
        <StatusPart $w={156}><SizeIcon /><span>1644 × 912px</span></StatusPart>
        <StatusPart $w={156} />
        <StatusPart $w={544} />
        <Zoom>
          <ZoomValue>100%</ZoomValue>
          <Round><svg width="8" height="2"><path d="M0 0h8v2H0z" fill="#444" /></svg></Round>
          <Track><svg width="10" height="17" viewBox="0 0 10 17"><path d="M0 0h10v12l-5 5-5-5z" fill="#0078d7" /></svg></Track>
          <Round><svg width="8" height="8"><path d="M0 3h8v2H0zM3 0h2v8H3z" fill="#444" /></svg></Round>
        </Zoom>
      </Status>
      <Taskbar>
        <Task $r={0}><svg width="16" height="16" viewBox="0 0 16 16" fill="#fff"><path d="M0 2.300 6.500 1.400v6.200H0zM7.300 1.300 16 0v7.600H7.300zM0 8.400h6.500v6.200L0 13.700zM7.300 8.400H16V16l-8.700-1.300z" /></svg></Task>
        <Task $r={2}><svg width="17" height="17" viewBox="0 0 17 17" fill="none" stroke="#fff" strokeWidth="1.400"><circle cx="10.500" cy="6" r="5.200" /><path d="M6.800 9.700.800 16" /></svg></Task>
        <Task $r={2}><svg width="22" height="18" viewBox="0 0 22 18"><path d="M0 0h8l1.500 1.500H21V18H0z" fill="#f3c13f" /><path d="M0 3h21.500v15H0z" fill="#ffe08a" /><path d="M4 18v-8h14v8h-4v-4H8v4z" fill="#35a4dd" /></svg></Task>
        <Task><svg width="22" height="22" viewBox="0 0 22 22"><circle cx="11" cy="11" r="11" fill="#fbc116" /><path d="M11 11 1.500 5.500A11 11 0 0 1 20.500 5.500H11z" fill="#e33b2e" /><path d="M1.500 5.500A11 11 0 0 0 10 22l5-8.500-9 0z" fill="#2da44e" /><circle cx="11" cy="11" r="5.400" fill="#fff" /><circle cx="11" cy="11" r="4.200" fill="#3b7de9" /></svg></Task>
        <Task $bar><svg width="24" height="24" viewBox="0 0 24 24" fill="none" stroke="#e0193f" strokeWidth="1.200"><circle cx="12" cy="12" r="11.200" /><ellipse cx="12" cy="12" rx="5" ry="9.500" /><ellipse cx="13.500" cy="12" rx="8" ry="10" /></svg></Task>
        <Task $on><PaintIcon /></Task>
        <Task $bar><WordTile><b>W</b><i /></WordTile></Task>
        <Tray>
          <Chevron d="u" c="#fff" w={14} sw={1} />
          <Clock>11:52 AM<br />10/3/2023</Clock>
          <svg width="16" height="16" viewBox="0 0 16 16"><path d="M0 0h16v13h-5l-3 3-3-3H0z" fill="#fff" /><path d="M3 3.500h10M3 6.500h10M3 9.500h6" stroke="#333" /></svg>
          <ShowDesktop />
        </Tray>
      </Taskbar>
    </Window>
  );
}
